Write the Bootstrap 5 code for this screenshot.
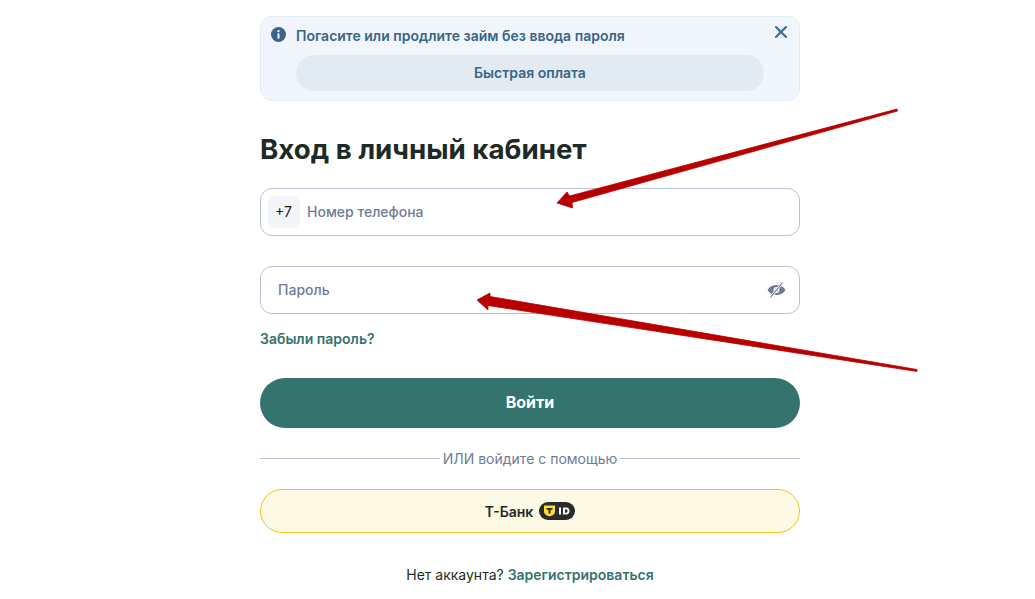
<!DOCTYPE html>
<html lang="ru">
<head>
    <meta charset="UTF-8">
    <meta name="viewport" content="width=device-width, initial-scale=1.0">
    <title>Вход в личный кабинет</title>
    <link href="https://cdn.jsdelivr.net/npm/bootstrap@5.3.0/dist/css/bootstrap.min.css" rel="stylesheet">
    <style>
        html, body { height: 100%; }
        body { background: #fff; font-family: Inter, "Noto Sans", sans-serif; color: #1e2a26; overflow: hidden; position: relative; }
        .login-col { width: 540px; margin-left: 260px; padding-top: 16px; }
        .promo-box { height: 85px; background: #f1f6fd; border: 1px solid #e3ebf4; border-radius: 12px; padding: 9px 10px 0 10px; }
        .promo-title { font-size: 14px; font-weight: 600; color: #396588; line-height: 20px; margin-left: 10px; }
        .promo-btn { width: 468px; height: 36px; margin: 9px 0 0 25px; padding: 0 0 2px; background: #e3ebf2; color: #396588; border: 0; border-radius: 18px; font-size: 14px; font-weight: 600; }
        .close-x { background: none; border: 0; padding: 0; line-height: 0; margin: -1px 1px 0 0; }
        .login-title { font-size: 27.7px; font-weight: 700; line-height: 34px; margin: 31px 0 22px; color: #1e2a26; }
        .field-box { height: 48px; border: 1px solid #b8c2d6; border-radius: 12px; background: #fff; margin-bottom: 30px; }
        .field-box input { border: 0; outline: 0; background: transparent; font: 500 14px Inter, sans-serif; color: #1e2a26; min-width: 0; padding-bottom: 2px; }
        .field-box input::placeholder { color: #6f7a99; opacity: 1; }
        .phone-code { width: 32px; height: 32px; background: #f4f5f8; border-radius: 6px; margin-left: 7px; font-size: 14px; padding: 0 1px 1px 0; color: #14201c; }
        .phone-input { padding-left: 7px; }
        .pass-input { padding-left: 17px; }
        .eye-icon { margin-right: 13px; }
        .forgot-link { display: block; margin-top: -15px; font-size: 14px; font-weight: 600; line-height: 20px; color: #35736f; text-decoration: none; }
        .enter-btn { width: 100%; height: 50px; margin-top: 29px; padding: 0 0 2px; background: #35736f; color: #fff; border: 0; border-radius: 25px; font-size: 16px; font-weight: 700; }
        .or-line { margin-top: 20px; height: 20px; font-size: 14px; color: #6f7a99; gap: 3px; }
        .or-line i { flex: 1; height: 1px; background: #b8c2d6; }
        .tbank-btn { width: 100%; height: 44px; margin-top: 21px; padding: 0; background: #fcf9e4; border: 1px solid #f5c518; border-radius: 22px; font-size: 14px; font-weight: 600; color: #1e2a26; gap: 6px; }
        .reg-line { margin-top: 32px; font-size: 14px; line-height: 20px; text-align: center; }
        .reg-line a { color: #35736f; font-weight: 600; text-decoration: none; }
        .arrows-layer { position: absolute; left: 0; top: 0; pointer-events: none; }
    </style>
</head>
<body>
<div class="login-col">
    <div class="promo-box">
        <div class="d-flex align-items-start">
            <svg class="flex-shrink-0" width="15" height="15" viewBox="0 0 15 15" style="margin-top:1px"><circle cx="7.5" cy="7.5" r="7.5" fill="#396588"/><rect x="6.5" y="6.3" width="2" height="5.4" rx=".6" fill="#f1f6fd"/><circle cx="7.5" cy="4.2" r="1.15" fill="#f1f6fd"/></svg>
            <div class="promo-title flex-grow-1">Погасите или продлите займ без ввода пароля</div>
            <button class="close-x" type="button" aria-label="Закрыть"><svg width="14" height="14" viewBox="0 0 14 14"><path d="M2 2l10 10M12 2L2 12" stroke="#396588" stroke-width="2" stroke-linecap="round"/></svg></button>
        </div>
        <button class="promo-btn d-block" type="button">Быстрая оплата</button>
    </div>

    <h1 class="login-title">Вход в личный кабинет</h1>

    <div class="field-box d-flex align-items-center">
        <span class="phone-code d-flex align-items-center justify-content-center">+7</span>
        <input class="phone-input flex-grow-1" type="text" placeholder="Номер телефона">
    </div>

    <div class="field-box d-flex align-items-center">
        <input class="pass-input flex-grow-1" type="password" placeholder="Пароль">
        <svg class="eye-icon flex-shrink-0" width="19" height="16" viewBox="0 0 19 16"><path d="M.5 8C2.5 4.6 5.7 3 9.5 3s7 1.6 9 5c-2 3.4-5.2 5-9 5s-7-1.600-9-5z" fill="#6f7a99"/><circle cx="9.500" cy="8" r="2.400" fill="none" stroke="#fff" stroke-width="1.100"/><path d="M3.500 15.500L15.500.5" stroke="#fff" stroke-width="2.600"/><path d="M3.500 15.500L15.500.5" stroke="#6f7a99" stroke-width="1.200"/></svg>
    </div>

    <a class="forgot-link" href="#">Забыли пароль?</a>

    <button class="enter-btn d-block" type="button">Войти</button>

    <div class="or-line d-flex align-items-center"><i></i><span>ИЛИ войдите с помощью</span><i></i></div>

    <button class="tbank-btn d-flex align-items-center justify-content-center" type="button">
        <span>Т-Банк</span>
        <svg width="36" height="18" viewBox="0 0 36 18"><rect width="36" height="18" rx="9" fill="#2b2b2b"/><path d="M5 3.500h11v6c0 2.800-2.500 4-5.500 5C7.500 13.500 5 12.300 5 9.500z" fill="#ffdd2d"/><path d="M7.500 6h6v1.700h-2v3.800h-2V7.700h-2z" fill="#2b2b2b"/><rect x="20" y="5.500" width="2" height="7" fill="#fff"/><path d="M24 5.500h3.200c2.200 0 3.300 1.500 3.300 3.500s-1.100 3.500-3.300 3.500H24zm2 1.700v3.600h1c1 0 1.500-.7 1.500-1.800s-.5-1.800-1.500-1.800z" fill="#fff"/></svg>
    </button>

    <div class="reg-line">Нет аккаунта? <a href="#">Зарегистрироваться</a></div>
</div>

<svg class="arrows-layer" width="1035" height="599" viewBox="0 0 1035 599">
    <path d="M557 203L567 192 569.500 196 897 109 897.500 111 572 202.500 572.500 208z" fill="#b80000" stroke="#b80000" stroke-width=".8" stroke-linejoin="round"/>
    <path d="M477 300L490 293 490 296.500 917 369.500 917 371.500 488 305.500 488 310z" fill="#b80000" stroke="#b80000" stroke-width=".8" stroke-linejoin="round"/>
</svg>
<script src="https://cdn.jsdelivr.net/npm/bootstrap@5.3.0/dist/js/bootstrap.bundle.min.js"></script>
</body>
</html>
